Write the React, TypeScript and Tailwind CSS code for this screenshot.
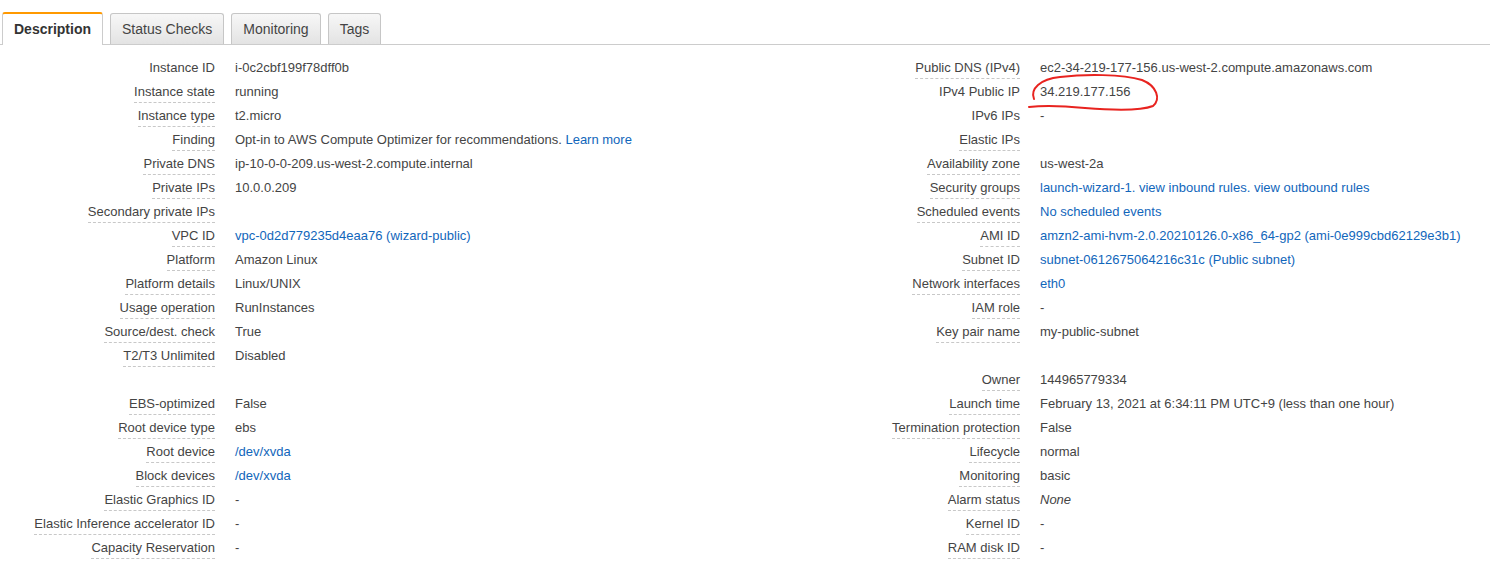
import type { ReactNode } from "react";

type Row = { label?: string; value?: ReactNode; plain?: boolean };

const A = ({ children }: { children: ReactNode }) => <span className="text-[#1166bb] cursor-pointer">{children}</span>;

const leftRows: Row[] = [
  { label: "Instance ID", value: "i-0c2cbf199f78dff0b", plain: true },
  { label: "Instance state", value: "running" },
  { label: "Instance type", value: "t2.micro" },
  {
    label: "Finding",
    value: (
      <>
        Opt-in to AWS Compute Optimizer for recommendations. <A>Learn more</A>
      </>
    ),
  },
  { label: "Private DNS", value: "ip-10-0-0-209.us-west-2.compute.internal" },
  { label: "Private IPs", value: "10.0.0.209" },
  { label: "Secondary private IPs", value: "" },
  { label: "VPC ID", value: <A>vpc-0d2d779235d4eaa76 (wizard-public)</A> },
  { label: "Platform", value: "Amazon Linux" },
  { label: "Platform details", value: "Linux/UNIX" },
  { label: "Usage operation", value: "RunInstances" },
  { label: "Source/dest. check", value: "True" },
  { label: "T2/T3 Unlimited", value: "Disabled" },
  {},
  { label: "EBS-optimized", value: "False" },
  { label: "Root device type", value: "ebs" },
  { label: "Root device", value: <A>/dev/xvda</A> },
  { label: "Block devices", value: <A>/dev/xvda</A> },
  { label: "Elastic Graphics ID", value: "-" },
  { label: "Elastic Inference accelerator ID", value: "-" },
  { label: "Capacity Reservation", value: "-" },
];

const rightRows: Row[] = [
  { label: "Public DNS (IPv4)", value: "ec2-34-219-177-156.us-west-2.compute.amazonaws.com" },
  { label: "IPv4 Public IP", value: "34.219.177.156", plain: true },
  { label: "IPv6 IPs", value: "-", plain: true },
  { label: "Elastic IPs", value: "" },
  { label: "Availability zone", value: "us-west-2a" },
  { label: "Security groups", value: <A>launch-wizard-1. view inbound rules. view outbound rules</A> },
  { label: "Scheduled events", value: <A>No scheduled events</A> },
  { label: "AMI ID", value: <A>amzn2-ami-hvm-2.0.20210126.0-x86_64-gp2 (ami-0e999cbd62129e3b1)</A> },
  { label: "Subnet ID", value: <A>subnet-0612675064216c31c (Public subnet)</A> },
  { label: "Network interfaces", value: <A>eth0</A> },
  { label: "IAM role", value: "-" },
  { label: "Key pair name", value: "my-public-subnet" },
  {},
  { label: "Owner", value: "144965779334" },
  { label: "Launch time", value: "February 13, 2021 at 6:34:11 PM UTC+9 (less than one hour)" },
  { label: "Termination protection", value: "False" },
  { label: "Lifecycle", value: "normal" },
  { label: "Monitoring", value: "basic" },
  { label: "Alarm status", value: <i>None</i> },
  { label: "Kernel ID", value: "-" },
  { label: "RAM disk ID", value: "-" },
];

const DetailRow = ({ row }: { row: Row }) => (
  <div className="flex h-6 items-start">
    <div className="w-[215px] shrink-0 text-right">
      {row.label && (
        <span
          className={
            row.plain
              ? "inline-block pt-[4px] pb-[2px] leading-4"
              : "inline-block pt-[4px] pb-[2px] leading-4 border-b border-dashed border-[#c8c8c8]"
          }
        >
          {row.label}
        </span>
      )}
    </div>
    <div className="pl-5 pt-[4px] leading-4 whitespace-nowrap">{row.value}</div>
  </div>
);

const tabs = ["Status Checks", "Monitoring", "Tags"];

export default function App() {
  return (
    <div className="relative w-[1490px] h-[562px] bg-white text-[13px] text-[#444] font-['Liberation_Sans',Arial,sans-serif] overflow-hidden">
      <div className="flex items-end gap-[7px] pl-[2px] pt-[12px] border-b border-[#cccccc]">
        <div className="-mb-px flex h-[33px] items-center rounded-t-[3px] border border-b-0 border-t-2 border-[#cccccc] border-t-[#f90] bg-white px-[11px] text-[14px] font-bold text-[#333]">
          Description
        </div>
        {tabs.map((t) => (
          <div
            key={t}
            className="flex h-[31px] items-center rounded-t-[3px] border border-b-0 border-[#c6c6c6] bg-gradient-to-b from-[#f7f7f7] to-[#e3e3e3] px-[11px] text-[14px] text-[#444]"
          >
            {t}
          </div>
        ))}
      </div>

      <div className="flex pt-[11px]">
        <div className="w-[805px] shrink-0">
          {leftRows.map((r, i) => (
            <DetailRow key={i} row={r} />
          ))}
        </div>
        <div className="flex-1">
          {rightRows.map((r, i) => (
            <DetailRow key={i} row={r} />
          ))}
        </div>
      </div>

      {/* hand-drawn red circle around the public IP */}
      <svg className="pointer-events-none absolute left-0 top-0" width="1490" height="562" viewBox="0 0 1490 562">
        <path
          d="M1034 99 C 1030 89, 1040 79, 1060 77 C 1085 74, 1122 74, 1142 80 C 1157 86, 1161 99, 1153 106 C 1140 111, 1110 110, 1085 108 C 1065 106, 1045 105, 1029 107"
          fill="none"
          stroke="#e8231f"
          strokeWidth="2"
          strokeLinecap="round"
        />
      </svg>
    </div>
  );
}
